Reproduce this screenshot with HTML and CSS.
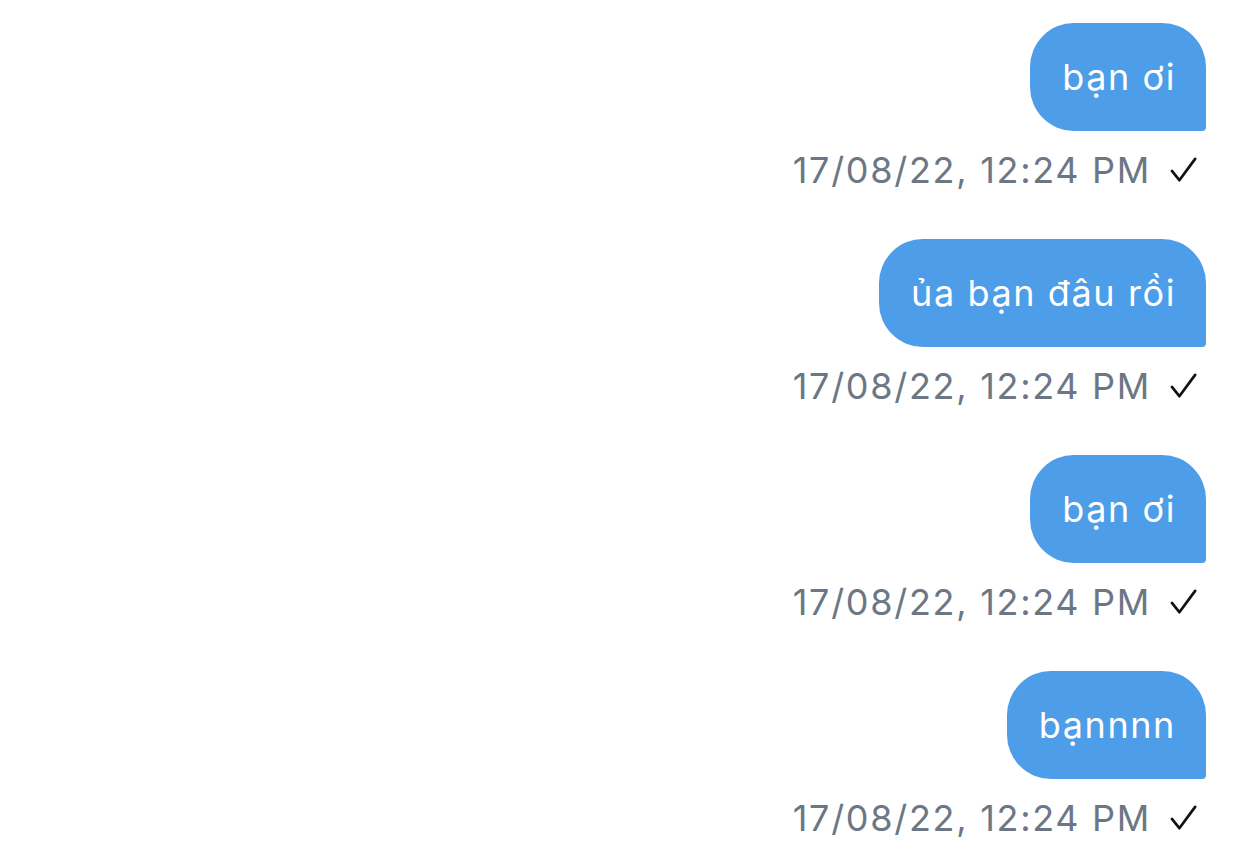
FILE: index.html
```html
<!DOCTYPE html>
<html lang="vi">
<head>
    <meta charset="UTF-8">
    <title>Chat</title>
    <link rel="stylesheet" href="styles.css">
</head>
<body>
    <div class="chat">
        <div class="msg">
            <div class="bubble">bạn ơi</div>
            <div class="meta"><span>17/08/22, 12:24 PM</span><svg class="tick" viewBox="0 0 30 28"><path d="M2 15 L10 25 L27 2"/></svg></div>
        </div>
        <div class="msg">
            <div class="bubble">ủa bạn đâu rồi</div>
            <div class="meta"><span>17/08/22, 12:24 PM</span><svg class="tick" viewBox="0 0 30 28"><path d="M2 15 L10 25 L27 2"/></svg></div>
        </div>
        <div class="msg">
            <div class="bubble">bạn ơi</div>
            <div class="meta"><span>17/08/22, 12:24 PM</span><svg class="tick" viewBox="0 0 30 28"><path d="M2 15 L10 25 L27 2"/></svg></div>
        </div>
        <div class="msg">
            <div class="bubble">bạnnnn</div>
            <div class="meta"><span>17/08/22, 12:24 PM</span><svg class="tick" viewBox="0 0 30 28"><path d="M2 15 L10 25 L27 2"/></svg></div>
        </div>
    </div>
</body>
</html>
```

FILE: styles.css
```css
* { margin: 0; padding: 0; box-sizing: border-box; }

body {
    background: #fff;
    font-family: Inter, "Noto Sans", sans-serif;
}

/* danh sách tin nhắn */
.chat {
    display: flex; flex-direction: column; align-items: flex-end;
    padding: 23px 36px 0 0;
}
.msg {
    display: flex; flex-direction: column; align-items: flex-end;
    margin-bottom: 44px;
}

.bubble {
    height: 108px; line-height: 108px;
    padding: 0 30px 0 32px;
    background-color: #4d9de8;
    color: #fff; font-size: 36px; letter-spacing: 1.6px;
    border-radius: 44px 44px 4px 44px;
}

.meta {
    display: flex; align-items: center; gap: 19px;
    margin-top: 14px; height: 50px;
    padding-right: 8px;
    color: #6b7785; font-size: 36px; letter-spacing: 1.7px;
}
.tick { width: 28px; height: 26px; }
.tick path { fill: none; stroke: #111; stroke-width: 2.9; stroke-linecap: round; stroke-linejoin: round; }
```
